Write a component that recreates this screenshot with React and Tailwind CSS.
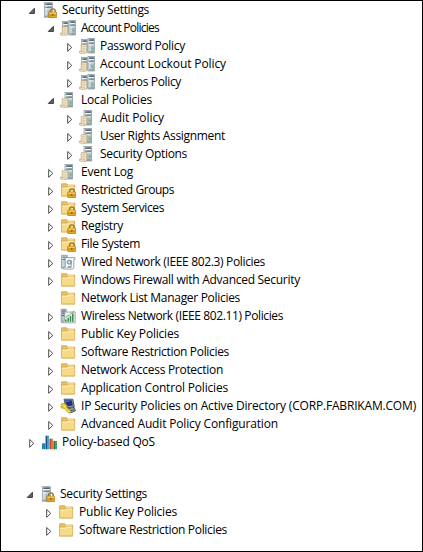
import { useLayoutEffect, useRef, useState } from "react";

function Folder() {
  return (
    <>
      <path d="M1.5 3.5V1.8h5.2l1 1.3h7v2H1.5z" fill="#e9c363" stroke="#cfa148" strokeWidth=".8" />
      <rect x="7.8" y="3.3" width="6" height="1.2" fill="#fff8e0" />
      <path d="M1.5 5.2h5.8l1-1h6.4v10H1.5z" fill="#f6da88" stroke="#d8ad50" strokeWidth=".8" />
      <path d="M2.5 6.2h5.2l1-1h5" stroke="#fff0bc" fill="none" />
      <path d="M2 13h12.3v.8H2z" fill="#ebc15e" />
    </>
  );
}

function Lock() {
  return (
    <>
      <path d="M9.6 10.6V9.2a2.3 2.3 0 0 1 4.6 0v1.4" stroke="#9a7428" strokeWidth="1.4" fill="none" />
      <rect x="7.7" y="10.2" width="8" height="5.3" rx=".5" fill="#e5a928" stroke="#a47617" strokeWidth=".7" />
      <path d="M8.4 11.1h6.6" stroke="#ffd973" />
      <path d="M8.4 13.2h6.6" stroke="#b98420" strokeWidth=".7" />
      <rect x="11.1" y="12" width="1.3" height="1.8" fill="#80590d" />
    </>
  );
}

function Tower({ x, y, w = 6.5, h = 13 }) {
  return (
    <>
      <rect x={x} y={y} width={w} height={h} fill="#a9b8bf" stroke="#8496a0" strokeWidth=".7" />
      <rect x={x + 0.4} y={y + 0.4} width={w * 0.35} height={h - 0.8} fill="#cfdadf" />
      <path d={`M${x + 1} ${y + 1.5}h${w - 1.6}`} stroke="#35454e" strokeWidth="1.1" />
      <path d={`M${x + 0.8} ${y + 2.9}h${w - 1.4}`} stroke="#f2f7f9" />
      <path d={`M${x + 1} ${y + 4.6}h${w - 1.6}`} stroke="#5c707b" strokeWidth=".9" />
      <path d={`M${x + 0.8} ${y + 6.3}h${w - 1.4}`} stroke="#edf2f4" strokeWidth="1.1" />
      <rect x={x + w - 2.6} y={y + 9.2} width="1.6" height="1.6" fill="#6cb070" />
      <path d={`M${x + 0.5} ${y + h - 1}h${w - 1}`} stroke="#83958f" />
    </>
  );
}

function Scroll() {
  return (
    <>
      <path d="M2.2 6.7h5.6v7.1c0 .8-.6 1.4-1.3 1.4H1.3c-.6 0-1-.5-1-1.2v-.8h1.9z" fill="#f8ebce" stroke="#b59d76" strokeWidth=".7" />
      <path d="M3.3 8.6h3.4M3.3 10.3h3.4M3.3 12h3.4" stroke="#cbb38c" strokeWidth=".7" />
      <path d="M.7 13.5h5v1.3" stroke="#cdb588" strokeWidth=".7" fill="none" />
    </>
  );
}

const ICONS = {
  folder: <Folder />,
  lockedFolder: <><Folder /><Lock /></>,
  lockedServer: <><Tower x={3.3} y={0.7} w={8} h={14.5} /><Lock /></>,
  policies: <><Tower x={2.4} y={1.6} w={5.8} h={12.6} /><Tower x={9} y={0.6} w={6.4} h={14.4} /><Scroll /></>,
  policy: <><Tower x={5} y={0.6} w={7.6} h={14.4} /><Scroll /></>,
  wired: (
    <>
      <path d="M1.5 1.3h5.8v13H1.5z" fill="#c9d4da" stroke="#8899a3" strokeWidth=".8" />
      <path d="M2.5 3.2h4M2.5 5.5h4" stroke="#657d8c" />
      <path d="M5.2 3.6h9.8v2h-1.2v7.8c0 1-.7 1.7-1.5 1.7H3.7c-.8 0-1.2-.7-1.2-1.6h2.7z" fill="#f8fafb" stroke="#7e8c94" strokeWidth=".8" />
      <circle cx="9.2" cy="8.2" r="2" fill="#c8dfea" stroke="#557e96" strokeWidth=".9" />
      <path d="M11.2 6.2v6.3H8.4M6.8 13.3h4.6" stroke="#72858f" strokeWidth=".8" fill="none" />
    </>
  ),
  wireless: (
    <>
      <path d="M1.2 1.3h5v13h-5z" fill="#b9c6cc" stroke="#7b8c94" strokeWidth=".8" />
      <path d="M2 3h3.2M2 5.2h3.2M2 7.5h3.2" stroke="#455d69" />
      <path d="M4.7 4h10.5v10.8H3V13h1.7z" fill="#e8f1ea" stroke="#8f9d97" strokeWidth=".8" />
      <path d="M5.9 13.8v-2.3M8.2 13.8v-4M10.5 13.8V8M12.8 13.8V5.5" stroke="#348c50" strokeWidth="1.5" />
      <path d="M5.6 9.3l4-2.3 4.5-4" stroke="#5f9877" strokeWidth=".8" fill="none" />
    </>
  ),
  ipsec: (
    <>
      <path d="M4 1.2h8.8l1.5 7.6-8.2 1.2z" fill="#9aa4b2" stroke="#3d4650" strokeWidth=".9" />
      <path d="M5.2 2.3h6.6l1.1 5.3-6.2 1z" fill="#1f2f86" />
      <path d="M6.2 3.3h3.5" stroke="#7087d4" strokeWidth=".8" />
      <path d="M7.5 10.8l6.6-1.4 1.4 3.4-5.2 2.2z" fill="#9ca4ab" stroke="#3f484f" strokeWidth=".9" />
      <path d="M9.8 13l4.2-1.4" stroke="#30383e" strokeWidth=".8" />
      <path d="M1 6.2l3-.8 3.3 2.2-.8 1.4 4.6 4.6-1 1.3-2-.4-4-4.4-2.2.2-1.2-1.8 2-.2z" fill="#f8df25" stroke="#8d7a12" strokeWidth=".6" />
    </>
  ),
  qos: (
    <>
      <path d="M1 9.3h3.4v5.9H1z" fill="#1f86b4" />
      <path d="M4.7 1.7h3.2v13.5H4.7z" fill="#3f9fd0" />
      <path d="M4.7 1.7h1.3v13.5H4.7z" fill="#1c4f86" />
      <path d="M8.6 4.7h3.4v10.5H8.6z" fill="#ee7146" />
      <path d="M8.6 4.7h1.1v10.5H8.6z" fill="#a83c22" />
      <path d="M12.6 6.9H16v8.3h-3.4z" fill="#3fa868" />
      <path d="M12.6 6.9h1.1v8.3h-1.1z" fill="#1c6d3c" />
    </>
  ),
};

function Arrow({ state }) {
  return (
    <svg className="h-[18px] w-2 shrink-0" viewBox="0 0 8 18">
      {state === "open" && <path d="M6.4 7.3v5.1H1.3z" fill="#666" stroke="#2e2e2e" strokeWidth=".9" />}
      {state === "closed" && <path d="M1.7 6.5v7.8l4.1-3.9z" fill="#fff" stroke="#444" strokeWidth=".95" />}
    </svg>
  );
}

function Label({ text, width }) {
  const ref = useRef(null);
  const [spacing, setSpacing] = useState(0);
  useLayoutEffect(() => {
    const natural = ref.current.getBoundingClientRect().width;
    setSpacing((width - natural) / text.length);
  }, [text, width]);
  return (
    <span ref={ref} className="whitespace-pre" style={{ letterSpacing: spacing + "px" }}>
      {text}
    </span>
  );
}

const INDENT = ["pl-0", "pl-[19px]", "pl-[38px]"];

function Row({ level, state, icon, text, width }) {
  return (
    <li className={"flex h-[18px] items-center " + INDENT[level]}>
      <Arrow state={state} />
      <svg className="ml-[5px] mr-[5px] size-4 shrink-0" viewBox="0 0 16 16">{ICONS[icon]}</svg>
      <Label text={text} width={width} />
    </li>
  );
}

const DOMAIN = [
  [0, "open", "lockedServer", "Security Settings", 87],
  [1, "open", "policies", "Account Policies", 78],
  [2, "closed", "policies", "Password Policy", 85],
  [2, "closed", "policies", "Account Lockout Policy", 126],
  [2, "closed", "policies", "Kerberos Policy", 81],
  [1, "open", "policy", "Local Policies", 71],
  [2, "closed", "policy", "Audit Policy", 64],
  [2, "closed", "policy", "User Rights Assignment", 125],
  [2, "closed", "policy", "Security Options", 87],
  [1, "closed", "policy", "Event Log", 52],
  [1, "closed", "lockedFolder", "Restricted Groups", 93],
  [1, "closed", "lockedFolder", "System Services", 83],
  [1, "closed", "lockedFolder", "Registry", 42],
  [1, "closed", "lockedFolder", "File System", 59],
  [1, "closed", "wired", "Wired Network (IEEE 802.3) Policies", 184],
  [1, "closed", "folder", "Windows Firewall with Advanced Security", 219],
  [1, "none", "folder", "Network List Manager Policies", 159],
  [1, "closed", "wireless", "Wireless Network (IEEE 802.11) Policies", 202],
  [1, "closed", "folder", "Public Key Policies", 98],
  [1, "closed", "folder", "Software Restriction Policies", 148],
  [1, "closed", "folder", "Network Access Protection", 142],
  [1, "closed", "folder", "Application Control Policies", 147],
  [1, "closed", "ipsec", "IP Security Policies on Active Directory (CORP.FABRIKAM.COM)", 335],
  [1, "closed", "folder", "Advanced Audit Policy Configuration", 197],
  [0, "closed", "qos", "Policy-based QoS", 93],
];

const USER = [
  [0, "open", "lockedServer", "Security Settings", 87],
  [1, "closed", "folder", "Public Key Policies", 98],
  [1, "closed", "folder", "Software Restriction Policies", 148],
];

function Tree({ rows }) {
  return (
    <ul>
      {rows.map(([level, state, icon, text, width], i) => (
        <Row key={i} level={level} state={state} icon={icon} text={text} width={width} />
      ))}
    </ul>
  );
}

export default function App() {
  return (
    <main className="h-[552px] w-[423px] overflow-hidden border border-black bg-white font-['Open_Sans','Noto_Sans',sans-serif] text-[12px] leading-[18px] text-black">
      <div className="pl-[27px]">
        <Tree rows={DOMAIN} />
      </div>
      <div className="pl-[25px] pt-[34px]">
        <Tree rows={USER} />
      </div>
    </main>
  );
}
